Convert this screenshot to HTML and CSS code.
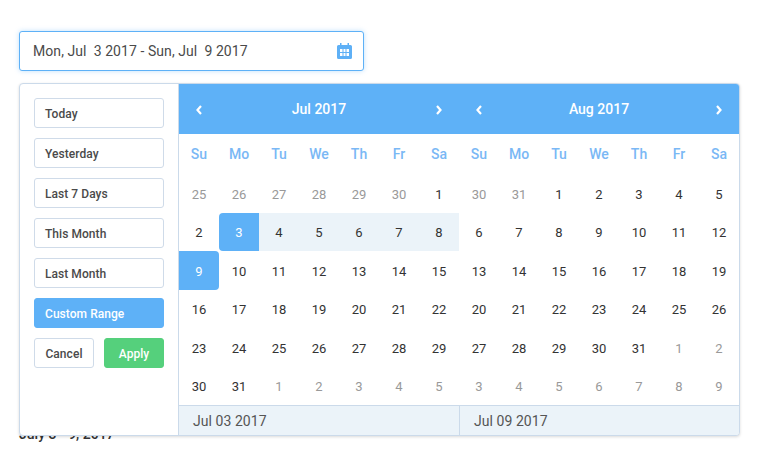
FILE: index.html
```html
<!DOCTYPE html>
<html lang="en">
<head>
<meta charset="utf-8">
<title>Date range picker</title>
<link rel="stylesheet" href="styles.css">
</head>
<body>
<div class="page">
  <div class="field">
    <span class="field-text">Mon, Jul  3 2017 - Sun, Jul  9 2017</span>
    <svg class="field-icon" width="15" height="16" viewBox="0 0 15 16"><path fill="#5eb0f6" fill-rule="evenodd" d="M1.500 2H3V0H4.500V2H10.500V0H12V2H13.500A1.500 1.500 0 0 1 15 3.500V14.500A1.500 1.500 0 0 1 13.500 16H1.500A1.500 1.500 0 0 1 0 14.500V3.500A1.500 1.500 0 0 1 1.500 2ZM3 6V9H5.500V6ZM6.500 6V9H8.500V6ZM9.500 6V9H12V6ZM3 10V13H5.500V10ZM6.500 10V13H8.500V10ZM9.500 10V13H12V10Z"/></svg>
  </div>
  <p class="summary">July 3 - 9, 2017</p>
  <div class="popup">
    <div class="ranges">
      <button class="btn">Today</button>
      <button class="btn">Yesterday</button>
      <button class="btn">Last 7 Days</button>
      <button class="btn">This Month</button>
      <button class="btn">Last Month</button>
      <button class="btn btn-active">Custom Range</button>
      <div class="actions">
        <button class="btn btn-cancel">Cancel</button>
        <button class="btn btn-apply">Apply</button>
      </div>
    </div>
    <div class="main">
      <div class="calendars">
        <div class="cal">
          <div class="cal-head">
            <svg class="chev" width="8" height="10" viewBox="0 0 8 10"><path d="M6 1L2.500 5L6 9" fill="none" stroke="#fff" stroke-width="2.200"/></svg>
            <span class="cal-title">Jul 2017</span>
            <svg class="chev" width="8" height="10" viewBox="0 0 8 10"><path d="M2 1L5.500 5L2 9" fill="none" stroke="#fff" stroke-width="2.200"/></svg>
          </div>
          <div class="grid">
            <span class="dow">Su</span><span class="dow">Mo</span><span class="dow">Tu</span><span class="dow">We</span><span class="dow">Th</span><span class="dow">Fr</span><span class="dow">Sa</span>
            <span class="day off">25</span><span class="day off">26</span><span class="day off">27</span><span class="day off">28</span><span class="day off">29</span><span class="day off">30</span><span class="day">1</span>
            <span class="day">2</span><span class="day start">3</span><span class="day range">4</span><span class="day range">5</span><span class="day range">6</span><span class="day range">7</span><span class="day range">8</span>
            <span class="day end">9</span><span class="day">10</span><span class="day">11</span><span class="day">12</span><span class="day">13</span><span class="day">14</span><span class="day">15</span>
            <span class="day">16</span><span class="day">17</span><span class="day">18</span><span class="day">19</span><span class="day">20</span><span class="day">21</span><span class="day">22</span>
            <span class="day">23</span><span class="day">24</span><span class="day">25</span><span class="day">26</span><span class="day">27</span><span class="day">28</span><span class="day">29</span>
            <span class="day">30</span><span class="day">31</span><span class="day off">1</span><span class="day off">2</span><span class="day off">3</span><span class="day off">4</span><span class="day off">5</span>
          </div>
        </div>
        <div class="cal">
          <div class="cal-head">
            <svg class="chev" width="8" height="10" viewBox="0 0 8 10"><path d="M6 1L2.500 5L6 9" fill="none" stroke="#fff" stroke-width="2.200"/></svg>
            <span class="cal-title">Aug 2017</span>
            <svg class="chev" width="8" height="10" viewBox="0 0 8 10"><path d="M2 1L5.500 5L2 9" fill="none" stroke="#fff" stroke-width="2.200"/></svg>
          </div>
          <div class="grid">
            <span class="dow">Su</span><span class="dow">Mo</span><span class="dow">Tu</span><span class="dow">We</span><span class="dow">Th</span><span class="dow">Fr</span><span class="dow">Sa</span>
            <span class="day off">30</span><span class="day off">31</span><span class="day">1</span><span class="day">2</span><span class="day">3</span><span class="day">4</span><span class="day">5</span>
            <span class="day">6</span><span class="day">7</span><span class="day">8</span><span class="day">9</span><span class="day">10</span><span class="day">11</span><span class="day">12</span>
            <span class="day">13</span><span class="day">14</span><span class="day">15</span><span class="day">16</span><span class="day">17</span><span class="day">18</span><span class="day">19</span>
            <span class="day">20</span><span class="day">21</span><span class="day">22</span><span class="day">23</span><span class="day">24</span><span class="day">25</span><span class="day">26</span>
            <span class="day">27</span><span class="day">28</span><span class="day">29</span><span class="day">30</span><span class="day">31</span><span class="day off">1</span><span class="day off">2</span>
            <span class="day off">3</span><span class="day off">4</span><span class="day off">5</span><span class="day off">6</span><span class="day off">7</span><span class="day off">8</span><span class="day off">9</span>
          </div>
        </div>
      </div>
      <div class="foot">
        <div class="foot-cell">Jul 03 2017</div>
        <div class="foot-cell">Jul 09 2017</div>
      </div>
    </div>
  </div>
</div>
</body>
</html>
```
FILE: styles.css
```css
* { box-sizing: border-box; }
html, body { margin: 0; background: #fff; }
body { font-family: Roboto, "Liberation Sans", sans-serif; color: #333; overflow: hidden; }
.page { position: relative; width: 772px; height: 457px; padding: 31px 19px 0; }
.field {
  width: 345px; height: 40px; display: flex; align-items: center; justify-content: space-between;
  padding: 0 11px 0 13px; border: 1px solid #5eb1f7; border-radius: 3px;
  box-shadow: 0 0 5px rgba(94, 177, 247, .4); background: #fff;
}
.field-text { font-size: 14px; letter-spacing: .07px; white-space: pre; color: #4a4a4a; }
.field-icon { display: block; }
.summary { margin: 355px 0 0; font-size: 14px; font-weight: 500; line-height: 16px; color: #333; }
.popup {
  position: absolute; left: 19px; top: 83px; width: 721px; height: 353px; display: flex;
  background: #fff; border: 1px solid #cbdaea; border-radius: 4px; box-shadow: 0 1px 3px rgba(0, 0, 0, .15); overflow: hidden;
}
.ranges {
  width: 159px; flex: none; padding: 14px 14px 0; display: flex; flex-direction: column; gap: 10px;
  border-right: 1px solid #cbdaea;
}
.btn {
  display: block; width: 100%; height: 30px; padding: 2px 10px 0; text-align: left; font: 500 12px Roboto, sans-serif; letter-spacing: .05px; color: #4a4a4a;
  background: #fff; border: 1px solid #cfdbe9; border-radius: 3px;
}
.btn-active { background: #5eb1f7; border-color: #5eb1f7; color: #fff; }
.actions { display: flex; gap: 10px; }
.btn-cancel { width: 60px; text-align: center; padding: 2px 0 0; }
.btn-apply { width: 60px; text-align: center; padding: 2px 0 0; background: #55d07c; border-color: #55d07c; color: #fff; }
.main { flex: 1; display: flex; flex-direction: column; }
.calendars { display: flex; }
.cal { width: 280px; }
.cal-head {
  height: 50px; background: #5eb1f7; color: #fff; display: flex; align-items: center; justify-content: space-between; padding: 0 16px 0 16px;
}
.cal-title { font-size: 14px; font-weight: 500; margin-top: -1px; }
.chev { display: block; margin-top: 2px; }
.grid { display: grid; grid-template-columns: repeat(7, 40px); grid-template-rows: 40px repeat(6, 38.500px); }
.dow { display: flex; align-items: center; justify-content: center; font-size: 14px; font-weight: 500; color: #7ab8f5; }
.day { display: flex; align-items: center; justify-content: center; padding-top: 2px; font-size: 13px; color: #333; }
.off { color: #999; }
.range { background: #ebf3f9; }
.start { background: #5eb1f7; color: #fff; border-radius: 4px 0 0 4px; }
.end { background: #5eb1f7; color: #fff; border-radius: 0 4px 4px 0; }
.foot { flex: 1; display: flex; background: #ebf3f9; border-top: 1px solid #cbdaea; }
.foot-cell { width: 280px; padding: 0 14px; display: flex; align-items: center; font-size: 14px; letter-spacing: .05px; color: #555; }
.foot-cell + .foot-cell { border-left: 1px solid #cbdaea; flex: 1; }
```
